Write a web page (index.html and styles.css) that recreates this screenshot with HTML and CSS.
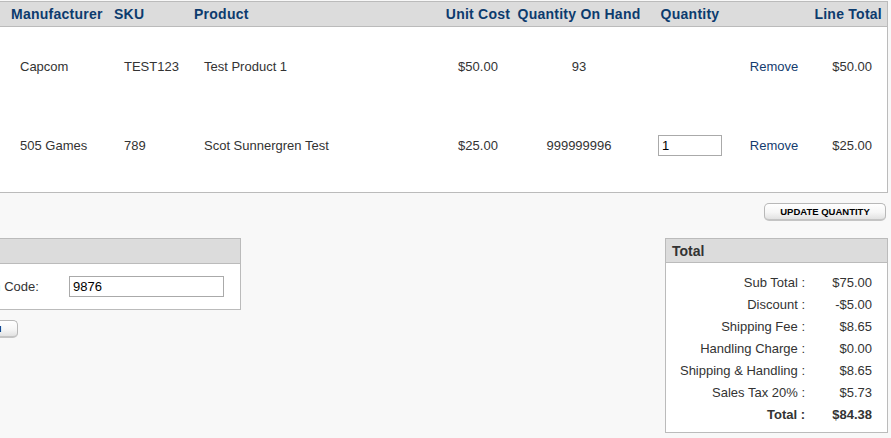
FILE: index.html
```html
<!DOCTYPE html>
<html>
<head>
<meta charset="utf-8">
<link rel="stylesheet" href="styles.css">
</head>
<body>
<div class="page">
  <div class="cart">
    <table class="cart-table">
      <colgroup>
        <col class="c1"><col class="c2"><col class="c3"><col class="c4"><col class="c5"><col class="c6"><col class="c7"><col class="c8">
      </colgroup>
      <thead>
        <tr>
          <th class="l first">Manufacturer</th>
          <th class="l">SKU</th>
          <th class="l">Product</th>
          <th>Unit Cost</th>
          <th>Quantity On Hand</th>
          <th>Quantity</th>
          <th></th>
          <th class="r">Line Total</th>
        </tr>
      </thead>
      <tbody>
        <tr>
          <td class="l first">Capcom</td>
          <td class="l">TEST123</td>
          <td class="l">Test Product 1</td>
          <td>$50.00</td>
          <td>93</td>
          <td></td>
          <td class="rm"><a class="remove" href="#">Remove</a></td>
          <td class="r">$50.00</td>
        </tr>
        <tr>
          <td class="l first">505 Games</td>
          <td class="l">789</td>
          <td class="l">Scot Sunnergren Test</td>
          <td>$25.00</td>
          <td>999999996</td>
          <td><input class="qty" type="text" value="1"></td>
          <td class="rm"><a class="remove" href="#">Remove</a></td>
          <td class="r">$25.00</td>
        </tr>
      </tbody>
    </table>
  </div>

  <div class="update-row">
    <button class="btn update">UPDATE QUANTITY</button>
  </div>

  <div class="bottom">
    <div class="left-col">
      <div class="box coupon">
        <div class="box-head"></div>
        <div class="coupon-body">
          <span class="coupon-label">Coupon Code:</span>
          <input class="coupon-input" type="text" value="9876">
        </div>
      </div>
      <button class="btn apply">APPLY COUPON</button>
    </div>

    <div class="box totals">
      <div class="box-head totals-head">Total</div>
      <div class="totals-body">
        <div class="t-label">Sub Total :</div><div class="t-val">$75.00</div>
        <div class="t-label">Discount :</div><div class="t-val">-$5.00</div>
        <div class="t-label">Shipping Fee :</div><div class="t-val">$8.65</div>
        <div class="t-label">Handling Charge :</div><div class="t-val">$0.00</div>
        <div class="t-label">Shipping &amp; Handling :</div><div class="t-val">$8.65</div>
        <div class="t-label">Sales Tax 20% :</div><div class="t-val">$5.73</div>
        <div class="t-label strong">Total :</div><div class="t-val strong">$84.38</div>
      </div>
    </div>
  </div>
</div>
</body>
</html>
```

FILE: styles.css
```css
html, body {
  margin: 0;
  padding: 0;
  background: #f8f8f8;
  overflow: hidden;
}
body {
  font-family: "Liberation Sans", Arial, sans-serif;
  font-size: 13px;
  color: #333;
}
.page {
  margin: 0 3px 0 -1px;
}
.cart {
  margin-top: 1px;
  border: 1px solid #bbb;
  background: #fff;
  padding-bottom: 7px;
}
.cart-table {
  width: 100%;
  border-collapse: collapse;
  table-layout: fixed;
}
.c1 { width: 113px; }
.c2 { width: 80px; }
.c3 { width: 247px; }
.c4 { width: 76px; }
.c5 { width: 126px; }
.c6 { width: 96px; }
.c7 { width: 70px; }
.c8 { width: 79px; }
.cart-table th {
  background: #dcdcdc;
  height: 24px;
  padding: 0;
  border-bottom: 1px solid #bbb;
  color: #0c3b6e;
  font-size: 14px;
  font-weight: bold;
  letter-spacing: 0.25px;
  text-align: center;
  white-space: nowrap;
}
.cart-table td {
  height: 79px;
  padding: 0;
  text-align: center;
  vertical-align: middle;
  white-space: nowrap;
}
.cart-table th.l { text-align: left; padding-left: 1px; }
.cart-table th.first { padding-left: 11px; }
.cart-table td.l { text-align: left; padding-left: 11px; }
.cart-table td.first { padding-left: 20px; }
.cart-table td.rm { padding-left: 2px; }
.cart-table th.r { text-align: right; padding-right: 5px; }
.cart-table td.r { text-align: right; padding-right: 15px; }
.remove {
  color: #143c6e;
  text-decoration: none;
}
.qty {
  box-sizing: border-box;
  width: 64px;
  height: 21px;
  border: 1px solid #aaa;
  padding: 0 3px;
  font-family: "Liberation Sans", Arial, sans-serif;
  font-size: 13px;
  color: #000;
  margin: 0;
}
.update-row {
  display: flex;
  justify-content: flex-end;
  margin-top: 10px;
  padding-right: 2px;
}
.btn {
  box-sizing: border-box;
  height: 18px;
  padding: 0;
  border: 1px solid #b8b8b8;
  border-bottom: 2px solid #c4c4c4;
  border-radius: 5px;
  background: linear-gradient(#ffffff, #f6f6f6 55%, #e2e2e2);
  font-family: "Liberation Sans", Arial, sans-serif;
  font-size: 9.5px;
  font-weight: bold;
  color: #000;
  line-height: 14px;
  text-align: center;
  white-space: nowrap;
  margin: 0;
}
.update { width: 122px; }
.bottom {
  display: flex;
  justify-content: space-between;
  align-items: flex-start;
  margin-top: 17px;
}
.left-col {
  display: flex;
  flex-direction: column;
  align-items: flex-start;
  margin-left: -59px;
}
.box {
  box-sizing: border-box;
  border: 1px solid #bbb;
  background: #fff;
}
.box-head {
  height: 24px;
  background: #dcdcdc;
  border-bottom: 1px solid #bbb;
}
.coupon {
  width: 301px;
}
.coupon-body {
  display: flex;
  align-items: center;
  padding: 12px 0 12px 14px;
}
.coupon-label {
  width: 114px;
  flex: none;
  white-space: nowrap;
}
.coupon-input {
  box-sizing: border-box;
  width: 155px;
  height: 21px;
  border: 1px solid #aaa;
  padding: 0 3px;
  margin: 0;
  font-family: "Liberation Sans", Arial, sans-serif;
  font-size: 13px;
  color: #000;
}
.apply {
  margin-top: 10px;
  margin-left: -30px;
  width: 108px;
}
.totals {
  width: 223px;
}
.totals-head {
  box-sizing: border-box;
  padding-left: 6px;
  line-height: 24px;
  font-size: 14px;
  font-weight: bold;
  color: #333;
}
.totals-body {
  display: grid;
  grid-template-columns: 1fr 67px;
  padding: 9px 15px 6px 0;
  line-height: 22px;
}
.t-label {
  text-align: right;
  white-space: nowrap;
}
.t-val {
  text-align: right;
  white-space: nowrap;
}
.strong {
  font-weight: bold;
}
```
